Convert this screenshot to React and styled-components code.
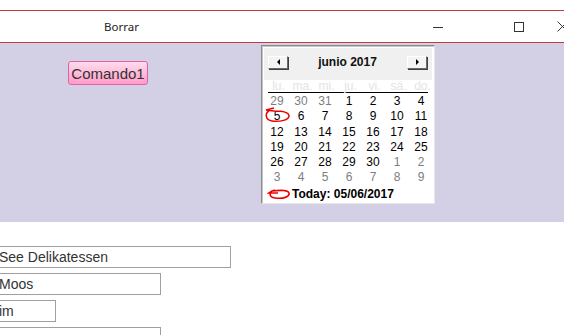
import React from 'react'
import styled, { createGlobalStyle } from 'styled-components'

const Global = createGlobalStyle`
  html, body { margin: 0; padding: 0; background: #fff; overflow: hidden; }
  body { font-family: "Liberation Sans", Arial, sans-serif; }
`

const prevDays = [29, 30, 31]
const junio = Array.from({ length: 30 }, (_, i) => i + 1)
const nextDays = [1, 2, 3, 4, 5, 6, 7, 8, 9]
const dayNames = ['lu.', 'ma.', 'mi.', 'ju.', 'vi.', 'sá.', 'do.']

const cells = [
  ...prevDays.map(d => ({ d, muted: true })),
  ...junio.map(d => ({ d, muted: false })),
  ...nextDays.map(d => ({ d, muted: true })),
]

const fields = [
  { value: 'See Delikatessen', width: 237 },
  { value: 'Moos', width: 167 },
  { value: 'im', width: 62 },
  { value: '', width: 167 },
]

const App = () => {
  return (
    <Page>
      <Global />
      <TopStrip />
      <TitleBar>
        <Title>Borrar</Title>
        <Controls>
          <Minimize />
          <Maximize />
          <svg width="11" height="11" viewBox="0 0 11 11">
            <path d="M0.5 0.5 L10.5 10.5 M10.5 0.5 L0.5 10.5" stroke="#333" strokeWidth="1" />
          </svg>
        </Controls>
      </TitleBar>
      <FormArea>
        <PinkButton>Comando1</PinkButton>
        <Calendar>
          <CalHeader>
            <NavButton>
              <Arrow $dir="left" />
            </NavButton>
            <Month>junio 2017</Month>
            <NavButton>
              <Arrow $dir="right" />
            </NavButton>
          </CalHeader>
          <Body>
            <DayNames>
              {dayNames.map(n => (
                <DayName key={n}>{n}</DayName>
              ))}
            </DayNames>
            <Grid>
              {cells.map((c, i) => (
                <Day key={i} $muted={c.muted}>
                  {c.d}
                </Day>
              ))}
              <Circle width="27" height="17" viewBox="0 0 27 17">
                <path d="M5 4 C 1 6, 1 13, 8 14 C 16 15, 25 13, 25 9 C 25 5, 18 4, 10 4 L 2 3 L 10 1" fill="none" stroke="#e00" strokeWidth="1.5" />
              </Circle>
            </Grid>
            <Today>
              <svg width="24" height="12" viewBox="0 0 24 12">
                <path d="M8 2 C 2 3, 1 9, 8 10 C 16 11, 23 9, 22 5 C 21 2, 12 2, 5 3 L 2 5 L 11 5" fill="none" stroke="#e00" strokeWidth="1.6" />
              </svg>
              <TodayText>Today: 05/06/2017</TodayText>
            </Today>
          </Body>
        </Calendar>
      </FormArea>
      <Fields>
        {fields.map((f, i) => (
          <Field key={i} $w={f.width}>
            {f.value}
          </Field>
        ))}
      </Fields>
    </Page>
  )
}

export default App

const Page = styled.div`
  width: 564px;
  height: 335px;
  display: flex;
  flex-direction: column;
  overflow: hidden;
  & > * { flex-shrink: 0; }
`
const TopStrip = styled.div`
  height: 10px;
  border-bottom: 1px solid #c23b3f;
`
const TitleBar = styled.div`
  height: 31px;
  display: flex;
  align-items: center;
  border-bottom: 1px solid #c23b3f;
  background: #fff;
`
const Title = styled.span`
  margin-left: 104px;
  font-family: "Noto Sans", "Liberation Sans", sans-serif;
  font-size: 11.5px;
  color: #222;
`
const Controls = styled.div`
  margin-left: auto;
  display: flex;
  align-items: center;
  margin-right: -4px;
  svg { flex-shrink: 0; }
`
const Minimize = styled.span`
  width: 10px;
  height: 1px;
  background: #333;
  margin-right: 71px;
  margin-top: 1px;
  flex-shrink: 0;
`
const Maximize = styled.span`
  width: 8px;
  height: 8px;
  border: 1px solid #333;
  margin-right: 33px;
  flex-shrink: 0;
`
const FormArea = styled.div`
  height: 179px;
  background: #d3cfe5;
  display: flex;
  align-items: flex-start;
  padding-top: 2px;
  box-sizing: border-box;
`
const PinkButton = styled.button`
  margin: 16px 0 0 68px;
  width: 80px;
  height: 24px;
  padding: 0;
  border: 1px solid #e85ea6;
  border-radius: 3px;
  background: linear-gradient(#ffdcec, #ff9cc8);
  font-family: "Liberation Sans", Arial, sans-serif;
  font-size: 15px;
  color: #333;
`
const Calendar = styled.div`
  margin-left: 113px;
  width: 174px;
  height: 159px;
  box-sizing: border-box;
  border: 1px solid #8a8a8a;
  border-right-color: #e8e8e8;
  border-bottom-color: #e8e8e8;
  box-shadow: inset 1px 1px 0 #c8c8c8;
  background: #fff;
  padding: 2px;
  font-family: "Liberation Sans", Arial, sans-serif;
  font-size: 12px;
`
const CalHeader = styled.div`
  height: 32px;
  background: #f0f0f0;
  display: flex;
  align-items: center;
  justify-content: space-between;
  padding: 0 5px 4px 4px;
  box-sizing: border-box;
`
const NavButton = styled.div`
  width: 20px;
  height: 13px;
  box-sizing: border-box;
  background: #f4f4f4;
  border: 1px solid;
  border-color: #fff #6b6b6b #6b6b6b #fff;
  box-shadow: 1px 1px 0 #404040;
  display: flex;
  align-items: center;
  justify-content: center;
`
const Arrow = styled.span`
  width: 0;
  height: 0;
  border-top: 3px solid transparent;
  border-bottom: 3px solid transparent;
  ${p => (p.$dir === 'left' ? 'border-right: 3px solid #000;' : 'border-left: 3px solid #000;')}
`
const Month = styled.span`
  font-weight: bold;
  font-size: 12px;
  color: #111;
`
const Body = styled.div`
  padding: 0 1px;
`
const DayNames = styled.div`
  display: grid;
  grid-template-columns: repeat(7, 24px);
  height: 12px;
  margin: 0 3px 1px;
  border-bottom: 1px solid #000;
`
const DayName = styled.span`
  text-align: center;
  color: #e4e4e4;
  font-size: 12px;
  line-height: 12px;
  margin-left: -3px;
`
const Grid = styled.div`
  position: relative;
  display: grid;
  grid-template-columns: repeat(7, 24px);
  grid-auto-rows: 15.3px;
`
const Day = styled.span`
  text-align: center;
  line-height: 15px;
  color: ${p => (p.$muted ? '#7e7e7e' : '#000')};
`
const Circle = styled.svg`
  position: absolute;
  left: -1px;
  top: 13px;
`
const Today = styled.div`
  display: flex;
  align-items: center;
  height: 16px;
  margin-left: 2px;
  gap: 1px;
`
const TodayText = styled.span`
  font-weight: bold;
  color: #000;
`
const Fields = styled.div`
  display: flex;
  flex-direction: column;
  gap: 5px;
  padding-top: 24px;
  margin-left: -6px;
`
const Field = styled.div`
  width: ${p => p.$w}px;
  height: 22px;
  box-sizing: border-box;
  border: 1px solid #a0a0a0;
  padding: 0 4px;
  font-family: "Liberation Sans", Arial, sans-serif;
  font-size: 14px;
  line-height: 20px;
  color: #333;
  flex-shrink: 0;
`
